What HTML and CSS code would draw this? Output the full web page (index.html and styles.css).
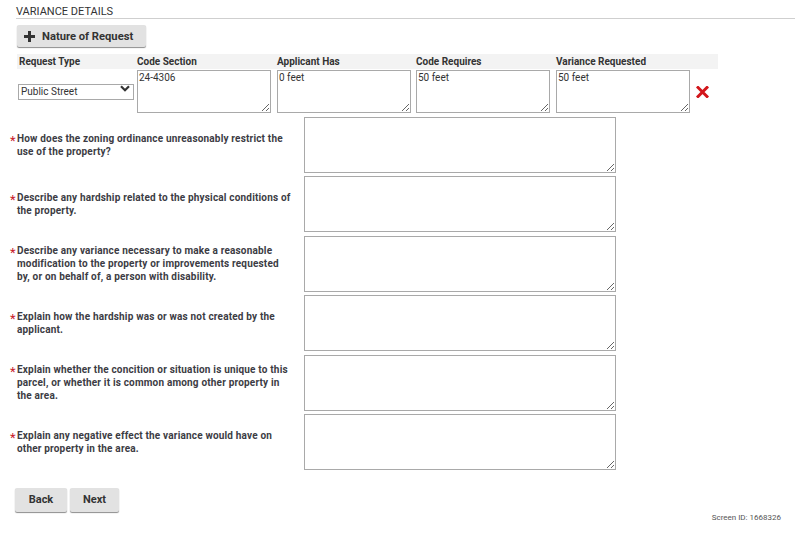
FILE: index.html
```html
<!DOCTYPE html>
<html lang="en">
<head>
<meta charset="utf-8">
<title>Variance Details</title>
<link rel="stylesheet" href="styles.css">
</head>
<body>
<div class="page">
  <section class="variance">
    <h2 class="section-title">VARIANCE DETAILS</h2>
    <button class="btn btn-add" type="button">
      <svg class="plus" width="11" height="11" viewBox="0 0 11 11" aria-hidden="true"><rect x="4" y="0" width="3" height="11"/><rect x="0" y="4" width="11" height="3"/></svg>
      Nature of Request
    </button>

    <div class="request-grid">
      <div class="head first">Request Type</div>
      <div class="head">Code Section</div>
      <div class="head">Applicant Has</div>
      <div class="head">Code Requires</div>
      <div class="head">Variance Requested</div>
      <div class="head"></div>

      <div class="cell first">
        <div class="select-wrap">
          <select class="select">
            <option>Public Street</option>
          </select>
          <svg class="chevron" width="10" height="7" viewBox="0 0 10 7" aria-hidden="true"><path d="M1 1.2 L5 5.2 L9 1.2" fill="none" stroke="#333" stroke-width="2.2"/></svg>
        </div>
      </div>
      <div class="cell"><textarea class="small-area">24-4306</textarea></div>
      <div class="cell"><textarea class="small-area">0 feet</textarea></div>
      <div class="cell"><textarea class="small-area">50 feet</textarea></div>
      <div class="cell"><textarea class="small-area">50 feet</textarea></div>
      <div class="cell remove">
        <svg width="13" height="12" viewBox="0 0 13 12" aria-hidden="true"><path d="M2 1.5 L11 10.5 M11 1.5 L2 10.5" stroke="#d2161b" stroke-width="3" stroke-linecap="square"/></svg>
      </div>
    </div>

    <div class="questions">
      <div class="question">
        <label class="q-label"><span class="req">*</span><span>How does the zoning ordinance unreasonably restrict the use of the property?</span></label>
        <textarea class="big-area"></textarea>
      </div>
      <div class="question">
        <label class="q-label"><span class="req">*</span><span>Describe any hardship related to the physical conditions of the property.</span></label>
        <textarea class="big-area"></textarea>
      </div>
      <div class="question">
        <label class="q-label"><span class="req">*</span><span>Describe any variance necessary to make a reasonable modification to the property or improvements requested by, or on behalf of, a person with disability.</span></label>
        <textarea class="big-area"></textarea>
      </div>
      <div class="question">
        <label class="q-label"><span class="req">*</span><span>Explain how the hardship was or was not created by the applicant.</span></label>
        <textarea class="big-area"></textarea>
      </div>
      <div class="question">
        <label class="q-label"><span class="req">*</span><span>Explain whether the concition or situation is unique to this parcel, or whether it is common among other property in the area.</span></label>
        <textarea class="big-area"></textarea>
      </div>
      <div class="question">
        <label class="q-label"><span class="req">*</span><span>Explain any negative effect the variance would have on other property in the area.</span></label>
        <textarea class="big-area"></textarea>
      </div>
    </div>
  </section>

  <div class="nav-buttons">
    <button class="btn btn-nav back" type="button">Back</button>
    <button class="btn btn-nav next" type="button">Next</button>
  </div>

  <div class="screen-id">Screen ID: 1668326</div>
</div>
</body>
</html>
```

FILE: styles.css
```css
* {
  box-sizing: border-box;
}

html, body {
  margin: 0;
  padding: 0;
  background: #fff;
}

body {
  font-family: Roboto, "Liberation Sans", Arial, sans-serif;
  color: #333;
}

.page {
  width: 795px;
}

.variance {
  padding-left: 10px;
}

.section-title {
  margin: 0 0 6px 6px;
  padding: 6px 0 0 0;
  font-size: 11px;
  line-height: 12px;
  font-weight: normal;
  color: #333;
  border-bottom: 1px solid #cfcfcf;
}

.btn {
  font-family: Roboto, "Liberation Sans", Arial, sans-serif;
  font-weight: bold;
  color: #333;
  background: #e2e2e2;
  border: none;
  border-radius: 2px;
  box-shadow: 0 1px 1px rgba(0, 0, 0, 0.45);
  cursor: pointer;
  padding: 0;
}

.btn-add {
  display: flex;
  align-items: center;
  margin-left: 7px;
  width: 129px;
  height: 22px;
  font-size: 11.2px;
  padding-left: 7px;
}

.plus {
  fill: #333;
  margin-right: 7px;
}

.request-grid {
  display: grid;
  grid-template-columns: 120px 140px 139px 140px 140px 22px;
  margin: 7px 0 0 7px;
  width: 701px;
}

.head {
  background: #f3f3f3;
  font-size: 10px;
  font-weight: bold;
  line-height: 15px;
  height: 15px;
  color: #333;
}

.head.first {
  padding-left: 2px;
}

.cell {
  display: flex;
  align-items: center;
  height: 44px;
  padding-top: 1px;
}

.cell.first {
  align-items: flex-start;
  padding: 11px 0 0 1px;
}

.select-wrap {
  position: relative;
  width: 116px;
  height: 16px;
}

.select {
  appearance: none;
  -webkit-appearance: none;
  width: 116px;
  height: 16px;
  border: 1px solid #a9a9a9;
  border-radius: 0;
  background: #fff;
  font-family: Roboto, "Liberation Sans", Arial, sans-serif;
  font-size: 10px;
  color: #333;
  padding: 0 0 0 2px;
  margin: 0;
}

.chevron {
  position: absolute;
  right: 4px;
  top: 5px;
  pointer-events: none;
}

.small-area {
  width: 134px;
  height: 43px;
  border: 1px solid #a9a9a9;
  border-radius: 0;
  font-family: Roboto, "Liberation Sans", Arial, sans-serif;
  font-size: 10px;
  line-height: 12px;
  color: #333;
  padding: 1px 1px;
  margin: 0;
}

.remove {
  justify-content: flex-start;
  padding-left: 0;
}

.questions {
  display: flex;
  flex-direction: column;
  gap: 3.4px;
  margin-top: 4px;
}

.question {
  display: flex;
  align-items: center;
}

.q-label {
  display: flex;
  width: 294px;
  padding-right: 10px;
  font-size: 10px;
  line-height: 13px;
  font-weight: bold;
  letter-spacing: 0.18px;
  color: #3c3c44;
}

.req {
  color: #c8202a;
  width: 7px;
  flex: none;
  font-size: 13px;
  line-height: 13px;
  font-weight: normal;
  letter-spacing: 0;
  position: relative;
  top: 2px;
}

.big-area {
  width: 312px;
  height: 56px;
  border: 1px solid #a9a9a9;
  border-radius: 0;
  margin: 0;
  padding: 2px;
  font-family: Roboto, "Liberation Sans", Arial, sans-serif;
  font-size: 10px;
}

.nav-buttons {
  display: flex;
  gap: 3px;
  margin: 18px 0 0 15px;
}

.btn-nav {
  height: 24px;
  font-size: 11px;
}

.back {
  width: 52px;
}

.next {
  width: 49px;
}

.screen-id {
  text-align: right;
  padding-right: 14px;
  margin-top: 1px;
  font-size: 8px;
  color: #555;
}
```
